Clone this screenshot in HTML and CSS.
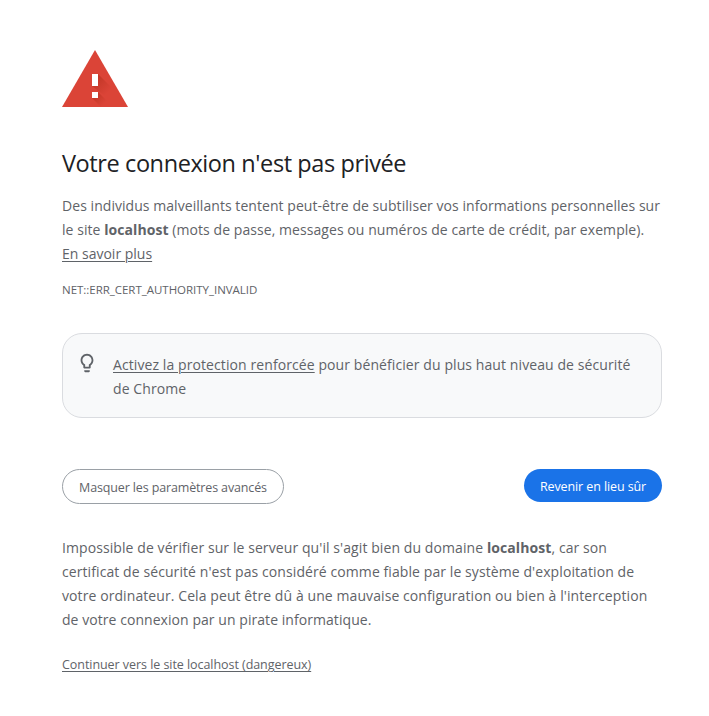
FILE: index.html
```html
<!DOCTYPE html>
<html lang="fr">
<head>
<meta charset="utf-8">
<title>Erreur liée à la confidentialité</title>
<link rel="stylesheet" href="styles.css">
</head>
<body>
<main class="interstitial">
  <svg class="warning" viewBox="0 0 66 57" aria-hidden="true">
    <defs>
      <linearGradient id="shade" gradientUnits="userSpaceOnUse" x1="32" y1="28" x2="46" y2="42">
        <stop offset="0" stop-color="#a52714" stop-opacity=".5"/>
        <stop offset="1" stop-color="#a52714" stop-opacity="0"/>
      </linearGradient>
      <linearGradient id="shade-dot" gradientUnits="userSpaceOnUse" x1="32" y1="44" x2="42" y2="54">
        <stop offset="0" stop-color="#a52714" stop-opacity=".5"/>
        <stop offset="1" stop-color="#a52714" stop-opacity="0"/>
      </linearGradient>
    </defs>
    <path d="M0 57 33 0l33 57z" fill="#db4437"/>
    <path d="M36 24 56 44V56L30 36z" fill="url(#shade)"/>
    <path d="M36 42 51 57H39l-9-9z" fill="url(#shade-dot)"/>
    <path d="M30 24h6v12h-6zM30 42h6v6h-6z" fill="#fff"/>
  </svg>
  <h1><span class="line w-title">Votre connexion n'est pas privée</span></h1>
  <p class="copy"><span class="line w-a">Des individus malveillants tentent peut-être de subtiliser vos informations personnelles sur</span><br><span class="line w-b">le site <strong>localhost</strong> (mots de passe, messages ou numéros de carte de crédit, par exemple).</span><br><a class="line" href="#">En savoir plus</a></p>
  <div class="code"><span class="line w-code">NET::ERR_CERT_AUTHORITY_INVALID</span></div>
  <section class="promo">
    <svg class="bulb" viewBox="0 0 24 24" aria-hidden="true"><path fill="#5f6368" d="M9 21c0 .55.45 1 1 1h4c.55 0 1-.45 1-1v-1H9v1zm3-19C8.140 2 5 5.140 5 9c0 2.380 1.190 4.470 3 5.740V17c0 .55.45 1 1 1h6c.55 0 1-.45 1-1v-2.260c1.810-1.270 3-3.360 3-5.740 0-3.860-3.140-7-7-7zm2.850 11.100-.85.6V16h-4v-2.300l-.85-.6C7.800 12.160 7 10.630 7 9c0-2.760 2.240-5 5-5s5 2.240 5 5c0 1.630-.8 3.160-2.150 4.100z"/></svg>
    <p><span class="line w-d"><a href="#">Activez la protection renforcée</a> pour bénéficier du plus haut niveau de sécurité</span><br><span class="line w-d">de Chrome</span></p>
  </section>
  <div class="buttons">
    <button class="secondary"><span class="line w-f">Masquer les paramètres avancés</span></button>
    <button class="primary"><span class="line w-g">Revenir en lieu sûr</span></button>
  </div>
  <p class="details"><span class="line w-h">Impossible de vérifier sur le serveur qu'il s'agit bien du domaine <strong>localhost</strong>, car son</span><br><span class="line w-h">certificat de sécurité n'est pas considéré comme fiable par le système d'exploitation de</span><br><span class="line w-h">votre ordinateur. Cela peut être dû à une mauvaise configuration ou bien à l'interception</span><br><span class="line w-k">de votre connexion par un pirate informatique.</span></p>
  <p class="proceed"><a class="line w-l" href="#">Continuer vers le site localhost (dangereux)</a></p>
</main>
</body>
</html>
```
FILE: styles.css
```css
* { box-sizing: border-box; }
body {
  margin: 0;
  background: #fff;
  color: #5f6368;
  font-family: "Segoe UI", "Open Sans", "Noto Sans", sans-serif;
  font-size: 14px;
  line-height: 24px;
}
.interstitial { width: 600px; margin: 50px 0 0 62px; }
.warning { display: block; width: 66px; height: 57px; }
h1 { margin: 37px 0 12px; color: #202124; font-size: 23.500px; font-weight: 400; line-height: 38px; }
p { margin: 0; }
.line { white-space: nowrap; }
.w-title { letter-spacing: -.4px; }
.w-a { letter-spacing: .053px; }
.w-b { letter-spacing: .065px; }
.w-code { letter-spacing: -.03px; }
.w-d { letter-spacing: .088px; }
.w-f { letter-spacing: -.14px; }
.w-g { letter-spacing: -.1px; }
.w-h { letter-spacing: .085px; }
.w-k { letter-spacing: .055px; }
.w-l { letter-spacing: -.055px; }
a { color: inherit; text-decoration: underline; text-underline-offset: 2px; text-decoration-thickness: 1px; }
.code { margin-top: 12px; font-size: 11.500px; }
.promo {
  display: flex;
  height: 85px;
  margin-top: 31px;
  padding: 18px 16px 0 13px;
  border: 1px solid #dadce0;
  border-radius: 20px;
  background: #f8f9fa;
}
.promo p { margin-top: 1px; }
.bulb { flex: none; width: 22px; height: 22px; margin-right: 15px; }
.buttons { display: flex; justify-content: space-between; align-items: flex-start; margin-top: 51px; }
button { display: flex; align-items: center; justify-content: center; padding: 2px 0 0; border-radius: 18px; font: 12.500px "Segoe UI", "Open Sans", sans-serif; }
.secondary { width: 222px; height: 35px; border: 1px solid #9aa0a6; background: #fff; color: #5f6368; }
.primary { width: 138px; height: 33px; border: 0; background: #1a73e8; color: #fff; }
.details { margin-top: 32px; }
.proceed { margin-top: 21px; font-size: 12.500px; }
```
